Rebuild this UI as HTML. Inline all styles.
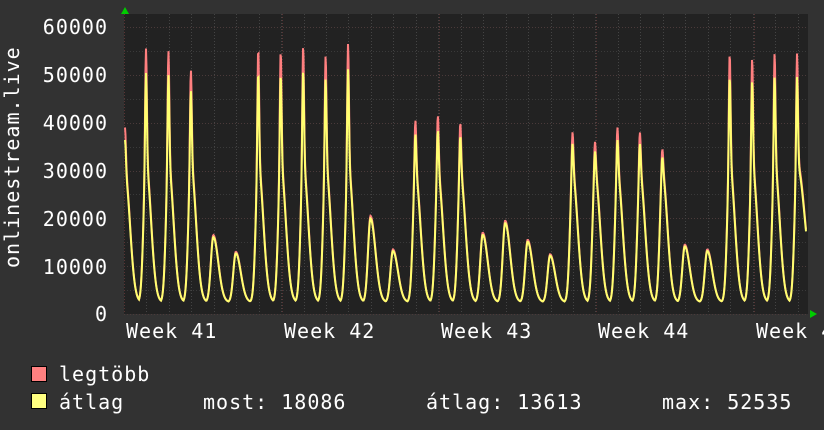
<!DOCTYPE html>
<html><head><meta charset="utf-8"><style>
html,body{margin:0;padding:0;background:#323232;}
body{width:824px;height:430px;overflow:hidden;position:relative;font-family:"DejaVu Sans Mono","Liberation Mono",monospace;color:#fff;}
.t{position:absolute;font-size:20px;white-space:pre;line-height:20px;letter-spacing:1px;}
.y{position:absolute;font-size:20px;line-height:20px;letter-spacing:1px;right:716px;text-align:right;}
.box{position:absolute;width:14px;height:14px;border:1px solid #000;}
</style></head><body>
<svg id="g" width="824" height="430" style="position:absolute;left:0;top:0">
<rect x="124" y="14" width="684" height="300" fill="#222"/>
<g id="grid"></g>
<g id="data"></g>
<polygon points="121,14 129,14 125,7" fill="#0c0"/>
<polygon points="810,310 810,318 817,314" fill="#0c0"/>
</svg>
<div class="y" style="top:17px">60000</div>
<div class="y" style="top:65px">50000</div>
<div class="y" style="top:113px">40000</div>
<div class="y" style="top:161px">30000</div>
<div class="y" style="top:209px">20000</div>
<div class="y" style="top:257px">10000</div>
<div class="y" style="top:304px">0</div>
<div class="t" style="left:-90px;top:156px;transform:rotate(-90deg);width:204px;text-align:center">onlinestream.live</div>
<div class="t" style="left:126px;top:321px">Week 41</div>
<div class="t" style="left:284px;top:321px">Week 42</div>
<div class="t" style="left:441px;top:321px">Week 43</div>
<div class="t" style="left:598px;top:321px">Week 44</div>
<div class="t" style="left:756px;top:321px">Week 45</div>
<div class="box" style="left:31px;top:366px;background:#ff8080"></div>
<div class="box" style="left:31px;top:393px;background:#ffff80"></div>
<div class="t" style="left:59px;top:364px">legtöbb</div>
<div class="t" style="left:59px;top:392px">átlag</div>
<div class="t" style="left:203px;top:392px">most: 18086</div>
<div class="t" style="left:426px;top:392px">átlag: 13613</div>
<div class="t" style="left:662px;top:392px">max: 52535</div>
<script>
var ns="http://www.w3.org/2000/svg",grid=document.getElementById('grid'),data=document.getElementById('data');
function ln(x1,y1,x2,y2,c,d){var l=document.createElementNS(ns,'line');l.setAttribute('x1',x1);l.setAttribute('y1',y1);l.setAttribute('x2',x2);l.setAttribute('y2',y2);l.setAttribute('stroke',c);l.setAttribute('stroke-width',1);if(d)l.setAttribute('stroke-dasharray',d);grid.appendChild(l);}
for(var v=0;v<=60000;v+=5000){var y=Math.round(314-v*0.004783)+0.5;ln(124,y,808,y,v%10000?'#3a3a3a':'#4a3a3a','1,2');}
for(var x=124;x<808;x+=22.45){var xx=Math.round(x)+0.5;ln(xx,14,xx,314,'#444','1,2');}
[126,284,441,598,756].forEach(function(x){ln(x-1.5,14,x-1.5,314,'#5a3535','1,2');});
var pk=[39000,55500,55000,51000,16500,13000,55500,55000,56000,54000,56500,20500,13500,40500,41500,40000,17000,19500,15500,12500,38000,36000,39000,38000,34500,14500,13500,54500,53500,54500,54500];
var xs=[125];for(var i=1;i<pk.length;i++)xs.push(146+(i-1)*22.45);
function val(x,avg){var m=2500;for(var i=0;i<pk.length;i++){var dx=x-xs[i],p=pk[i];
 var body=Math.min(p,p>45000?32000:30000)-2500;var spike=p-2500-body;if(avg){spike*=p>45000?0.82:0.8;body*=0.97;}
 var fw=(i==pk.length-1)?11:7;
 var g=dx<0?Math.exp(-Math.pow(dx/3.5,2)):Math.exp(-Math.pow(dx/fw,2));
 var v=2500+body*g+spike*Math.exp(-Math.pow(dx/1.2,2));if(v>m)m=v;}
 return m;}
function path(sc,col){var d='';for(var x=125;x<=806;x+=0.5){var y=314-val(x,sc)*0.004783;d+=(x==125?'M':'L')+x+','+y.toFixed(1);}var p=document.createElementNS(ns,'path');p.setAttribute('d',d);p.setAttribute('fill','none');p.setAttribute('stroke',col);p.setAttribute('stroke-width',2);data.appendChild(p);}
path(false,'#ff7f7f');path(true,'#ffff70');
</script>
</body></html>
